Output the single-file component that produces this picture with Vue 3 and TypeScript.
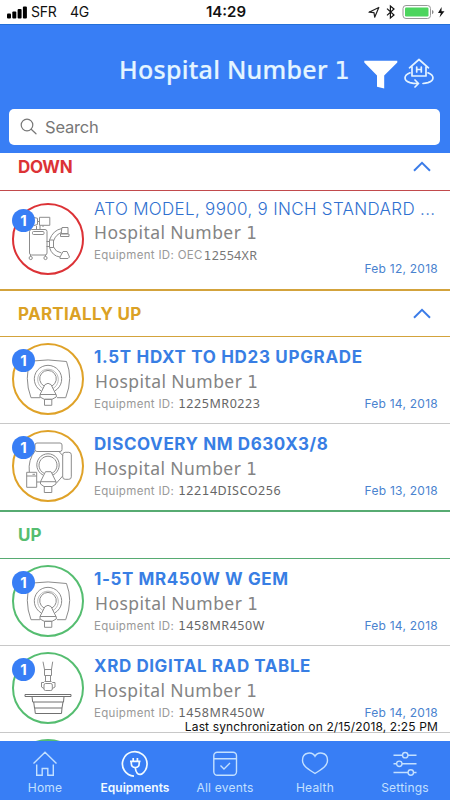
<script setup lang="ts">
import { defineComponent, h } from 'vue'

type Kind = 'carm' | 'mri' | 'nm' | 'xrd'

interface Equipment {
  name: string
  kind: Kind
  prefix?: string
  id: string
  date: string
  cls?: string
}

interface Section {
  title: string
  status: string
  chevron: boolean
  rows: Equipment[]
}

// Numeral "1" is drawn with a footed glyph.
const Spell = defineComponent({
  props: { text: { type: String, required: true } },
  setup(props) {
    return () =>
      h(
        'span',
        props.text.split(/(1)/).map((part) => (part === '1' ? h('span', { class: 'foot' }, part) : part)),
      )
  },
})

const sections: Section[] = [
  {
    title: 'DOWN',
    status: 'down',
    chevron: true,
    rows: [
      {
        name: 'ATO MODEL, 9900, 9 INCH STANDARD ...',
        kind: 'carm',
        prefix: 'OEC',
        id: '12554XR',
        date: 'Feb 12, 2018',
        cls: 'tall',
      },
    ],
  },
  {
    title: 'PARTIALLY UP',
    status: 'partial',
    chevron: true,
    rows: [
      { name: '1.5T HDXT TO HD23 UPGRADE', kind: 'mri', id: '1225MR0223', date: 'Feb 14, 2018', cls: 'shifted' },
      { name: 'DISCOVERY NM D630X3/8', kind: 'nm', id: '12214DISCO256', date: 'Feb 13, 2018' },
    ],
  },
  {
    title: 'UP',
    status: 'up',
    chevron: false,
    rows: [
      { name: '1-5T MR450W W GEM', kind: 'mri', id: '1458MR450W', date: 'Feb 14, 2018', cls: 'shifted' },
      { name: 'XRD DIGITAL RAD TABLE', kind: 'xrd', id: '1458MR450W', date: 'Feb 14, 2018' },
      { name: '', kind: 'mri', id: '', date: '' },
    ],
  },
]
</script>

<template>
  <div class="screen">
    <div class="status">
      <svg class="bars" width="21" height="13" viewBox="0 0 21 13">
        <rect x="0" y="7.5" width="4" height="5" rx="1" />
        <rect x="5.3" y="5.5" width="4" height="7" rx="1" />
        <rect x="10.6" y="3" width="4" height="9.5" rx="1" />
        <rect x="15.9" y="0.5" width="4" height="12" rx="1" />
      </svg>
      <span class="carrier">SFR</span>
      <span class="net">4G</span>
      <span class="clock">14:29</span>
      <svg class="sys" width="84" height="16" viewBox="0 0 84 16">
        <path d="M2 8.2 11.8 3.5 7.7 13.2 7 8.7Z" fill="none" stroke="#222" stroke-width="1.2" stroke-linejoin="round" />
        <path d="M20 4.6 27 11 23.4 14V2L27 5 20 11.4" fill="none" stroke="#111" stroke-width="1.2" />
        <rect x="36" y="1.5" width="27.5" height="13" rx="3" fill="#fff" stroke="#999" />
        <rect x="38" y="3.5" width="23.5" height="9" rx="1.2" fill="#4cd55e" />
        <path d="M65 6v4.2q1.6-.7 1.6-2.1T65 6Z" fill="#888" />
        <path d="M74.6 3 71 9h2.8l-1.3 4.4L77.500 7.300h-3Z" fill="#111" />
      </svg>
    </div>

    <header class="header">
      <div class="topline">
        <h1 class="title"><Spell text="Hospital Number 1" /></h1>
        <svg class="funnel" width="34" height="30" viewBox="0 0 34 30">
          <path d="M.3.8h33v1.6L20.2 15.500V28.500L13 26.800V15.500L.3 2.400Z" fill="#fff" />
        </svg>
        <svg class="site" width="30" height="30" viewBox="0 0 30 30" fill="none" stroke="#e4f3ff" stroke-width="1.7" stroke-linecap="round" stroke-linejoin="round">
          <path d="M5.500 9.800 15 1.500 24.500 9.800M8 8.500V18H22V8.500" />
          <path d="M12.700 9v5M17.300 9v5M12.700 11.500h4.600" stroke-width="1.700" />
          <path d="M6 14.800C-.7 17.500-.5 22.500 6 24.600q3.500 1 8 .9M11 22l3.500 3.500L11 29M24 14.800c6.700 2.700 6.500 7.700 0 9.800q-2.500.7-5 .9" />
        </svg>
      </div>
      <div class="search">
        <svg width="18" height="18" viewBox="0 0 18 18" fill="none" stroke="#777" stroke-width="1.2" stroke-linecap="round">
          <circle cx="7" cy="7" r="5.800" />
          <path d="M11.200 11.200 16 15.800" />
        </svg>
        <span>Search</span>
      </div>
    </header>

    <main class="list">
      <section v-for="s in sections" :key="s.title" :class="['section', s.status]">
        <div class="heading">
          <span>{{ s.title }}</span>
          <svg v-if="s.chevron" width="18" height="11" viewBox="0 0 18 11" fill="none" stroke="#3b7ce8" stroke-width="2">
            <path d="M1 9.700 9 1.900 17 9.700" />
          </svg>
        </div>
        <article v-for="(r, i) in s.rows" :key="i" :class="['row', r.cls]">
          <div class="avatar">
            <svg width="72" height="72" viewBox="0 0 72 72" fill="none" stroke="#8c8c8c" stroke-width="1" stroke-linejoin="round">
              <g v-if="r.kind === 'carm'">
                <rect x="27.500" y="14.300" width="10.300" height="8" />
                <path d="M22 14.500 25.500 15.300V21.500L22 22.500M24.500 23v3.500M28 22.500v4M25.500 18.500h2M31 22.500v1.500" />
                <rect x="17.500" y="26.500" width="17.500" height="25.500" rx="2" />
                <rect x="20.500" y="28.500" width="11.500" height="3" rx="1" />
                <path d="M18.500 52v1.500M33.500 52v1.500M34.500 38.500h3v5h-3M37.500 37h4v7.500h-4Z" />
                <circle cx="18.700" cy="55" r="1.600" />
                <circle cx="33.500" cy="55" r="1.600" />
                <path d="M37.500 37Q41 27 50 25.500M41.500 38Q44 31 50 29.500M37.500 44.500Q40 53 48 54M41.500 44Q43.500 49 49.500 50" />
                <path d="M50 24.500h6v6h-7ZM48.500 31h8.500v2.500h-8.500ZM48 54 51 48.500 55 48.500 57.500 54 56 55.500H48Z" />
              </g>
              <g v-else-if="r.kind === 'mri'">
                <path d="M28 54.700H19Q15.300 45 15.300 35.300 15.500 26 18 18.200 36 15.500 54.500 18.500 57.700 27 57.700 35.300 57.500 45 53.700 54.700H45" />
                <path d="M29 47.800A13.700 13.700 0 1 1 43 47.800" />
                <path d="M31 45.500A10.300 10.300 0 1 1 41 45.500" stroke="#bbb" />
                <path d="M32 43A8.300 8.300 0 1 1 40 43" />
                <path d="M28 51.500 33 41.600Q36 39 39 41.600L44 51.500ZM28 51.500V54L32.300 56.300H40L44.300 54V51.500" />
                <rect x="32.500" y="56.300" width="7.300" height="6" />
              </g>
              <g v-else-if="r.kind === 'nm'">
                <rect x="23" y="13" width="27" height="8.500" rx="2" />
                <rect x="50.700" y="22.300" width="8.600" height="27" rx="2.500" />
                <path d="M23 21Q16 30 17.300 42M47 21.500 50.700 25.500M50.700 46 44.500 53M25 52h4" />
                <path d="M31 45A11.200 11.200 0 1 1 41 45M32 43.300A9 9 0 1 1 40 43.300" />
                <rect x="14.700" y="42.300" width="10" height="15" />
                <path d="M14.700 46h10M20.500 44.300h2.500M28.500 51.700 33.500 41.700H39L44 51.700ZM28.500 51.700V54L32 56.500H40L44 54V51.700" />
                <rect x="32.300" y="56.500" width="7.500" height="6" />
              </g>
              <g v-else>
                <path d="M31 9.700 32.700 18.500M40.700 9.700 39.300 18.500M32.500 17.500h7v6h-7ZM33.500 23.500v6M38.500 23.500v6M32.500 29.500h7" />
                <rect x="32" y="31.500" width="8.300" height="7" rx="1.500" />
                <path d="M32 30.500H29.500V35L32 36.500M40.300 30.500H43V35L40.300 36.500" />
                <path d="M13 42.500H59V44.500H13ZM20 44.500 20.700 50H51.500L52 44.500M21.700 50 22.500 56H50L51 50M22.700 56 23.300 61.500H49.500L50 56" stroke="#707070" />
              </g>
            </svg>
            <span v-if="r.name" class="badge">1</span>
          </div>
          <div v-if="r.name" class="info">
            <div class="name">{{ r.name }}</div>
            <div class="place"><Spell text="Hospital Number 1" /></div>
            <div class="meta">
              <span class="label">Equipment ID:<template v-if="r.prefix">&nbsp;{{ r.prefix }}</template></span>
              <span class="code"><Spell :text="r.id" /></span>
              <span class="date">{{ r.date }}</span>
            </div>
          </div>
        </article>
      </section>
      <div class="sync">Last synchronization on 2/15/2018, 2:25 PM</div>
    </main>

    <nav class="tabs">
      <div class="tab">
        <svg width="28" height="28" viewBox="0 0 28 28"><path d="M2.500 13.500 14 2.200 25.500 13.500M5.700 14.500V25.200H11.200V18.500H16.800V25.200H22.300V14.500" /></svg>
        <span>Home</span>
      </div>
      <div class="tab active">
        <svg width="28" height="28" viewBox="0 0 28 28">
          <path d="M13 26.200A12.300 12.300 0 1 1 20.500 24.200Q15.200 25.500 14.300 18" stroke-width="1.700" />
          <path d="M9 11.300H19.500M10.300 11.500V13.500Q10.500 17.500 14.300 17.500T18.200 13.500V11.500M12.200 11V8M16.400 11V8" stroke-width="1.700" />
        </svg>
        <span>Equipments</span>
      </div>
      <div class="tab">
        <svg width="28" height="28" viewBox="0 0 28 28"><rect x="2.800" y="2.200" width="22.700" height="23" rx="3.500" /><path d="M2.800 8.800H25.500M9.500 15.500 13 19 19 13" /></svg>
        <span>All events</span>
      </div>
      <div class="tab">
        <svg width="28" height="28" viewBox="0 0 28 28"><path d="M14 6.300C11.500 1.500 1.500 1.500 1.500 10.200 1.500 16.500 8 19.500 14 23.500 20 19.500 26.500 16.500 26.500 10.200 26.500 1.500 16.500 1.500 14 6.300Z" /></svg>
        <span>Health</span>
      </div>
      <div class="tab">
        <svg width="28" height="28" viewBox="0 0 28 28">
          <path d="M2.500 5.200H11.500M17 5.200H25.500M2.500 13.800H5.500M11 13.800H25.500M2.500 22.500H17M22.500 22.500H25.500" />
          <circle cx="14.200" cy="5.200" r="2.700" /><circle cx="8.300" cy="13.800" r="2.700" /><circle cx="19.800" cy="22.500" r="2.700" />
        </svg>
        <span>Settings</span>
      </div>
    </nav>
  </div>
</template>

<style>
body {
  margin: 0;
}
.foot {
  font-family: 'DejaVu Sans', sans-serif;
  font-size: 0.96em;
}
</style>

<style scoped>
.screen {
  width: 450px;
  height: 800px;
  display: flex;
  flex-direction: column;
  overflow: hidden;
  background: #fff;
  font-family: Inter, sans-serif;
  white-space: nowrap;
}
.status {
  height: 24px;
  flex: none;
  display: grid;
  grid-template-columns: 24px 39px 136px 161px 84px;
  align-items: center;
  padding-left: 7px;
  box-sizing: border-box;
  font-size: 14px;
  line-height: 24px;
  color: #111;
}
.bars {
  fill: #000;
}
.carrier,
.net {
  letter-spacing: -0.2px;
}
.clock {
  font-weight: 600;
  font-size: 15px;
}
.header {
  height: 129px;
  flex: none;
  box-sizing: border-box;
  padding: 26px 10px 0 9px;
  background: #387ef5;
  border-top: 1px solid #2470d8;
}
.topline {
  display: flex;
  height: 59px;
  padding-left: 110px;
}
.title {
  margin: 0;
  width: 245px;
  font: 500 25px/36px 'Noto Sans', sans-serif;
  letter-spacing: 0.27px;
  -webkit-text-stroke: 0.2px #e4f5ff;
  color: #e4f5ff;
}
.funnel {
  margin-top: 9px;
}
.site {
  margin: 7px 0 0 6px;
}
.search {
  height: 36px;
  display: flex;
  align-items: center;
  gap: 7px;
  padding-left: 11px;
  margin-top: -1px;
  border-radius: 5px;
  background: #fff;
  font-size: 16.5px;
  letter-spacing: -0.2px;
  color: #777;
}
.list {
  flex: 1;
  min-height: 0;
  position: relative;
  overflow: hidden;
}
.heading {
  height: 48px;
  box-sizing: border-box;
  display: flex;
  align-items: center;
  justify-content: space-between;
  padding: 0 19px 0 18px;
  border-top: 2px solid;
  border-bottom: 1px solid;
  font-size: 17px;
  font-weight: 700;
}
.heading svg {
  margin-top: -1px;
}
.down .heading {
  height: 38px;
  padding-bottom: 10px;
  border-top: 0;
  color: #dc3236;
  border-color: #c24a4c;
  letter-spacing: -0.3px;
}
.partial .heading {
  color: #dba125;
  border-color: #d3a33c;
  letter-spacing: 0.3px;
}
.up .heading {
  height: 49px;
  color: #55bd70;
  border-color: #57ab72;
}
.row {
  height: 87px;
  box-sizing: border-box;
  display: flex;
  gap: 10px;
  padding: 6px 12px 0;
  border-bottom: 1px solid #c8c8c8;
}
.row:last-child {
  height: 86px;
  border-bottom: 0;
}
.row.tall {
  height: 98px;
  padding-top: 12px;
}
.avatar {
  width: 72px;
  height: 72px;
  flex: none;
  box-sizing: border-box;
  position: relative;
  border: 2px solid;
  border-radius: 50%;
}
.avatar svg {
  display: block;
  margin: -2px;
}
.down .avatar {
  border-color: #dc3236;
}
.partial .avatar {
  border-color: #dfa228;
}
.up .avatar {
  border-color: #55bd70;
}
.badge {
  position: absolute;
  left: -2px;
  top: 4px;
  width: 23px;
  height: 23px;
  border-radius: 50%;
  background: #387ef5;
  color: #fff;
  font-size: 15px;
  line-height: 23px;
  font-weight: 700;
  text-align: center;
}
.info {
  flex: 1;
  min-width: 0;
  padding-top: 2px;
}
.tall .info {
  margin-top: -9px;
}
.name {
  height: 24px;
  font-size: 17px;
  line-height: 24px;
  font-weight: 700;
  letter-spacing: 0.59px;
  color: #387ee4;
}
.partial .shifted .name {
  letter-spacing: 0.68px;
}
.tall .name {
  line-height: 26px;
  font-weight: 350;
  letter-spacing: 0.31px;
  color: #2f70d0;
}
.place {
  height: 24px;
  font: 17.5px/24px 'Noto Sans', sans-serif;
  letter-spacing: 0.44px;
  color: #848484;
}
.shifted .place {
  padding-left: 1px;
}
.meta {
  display: flex;
  height: 22px;
  font-size: 11.5px;
  line-height: 22px;
  color: #999;
}
.label {
  letter-spacing: 0.33px;
}
.code {
  margin-left: 4px;
  font: 12.5px/22px 'Noto Sans', sans-serif;
  letter-spacing: 0.55px;
  color: #666;
}
.tall .code {
  margin-left: 1px;
  padding-top: 1px;
  letter-spacing: 0.3px;
  color: #777;
}
.date {
  margin-left: auto;
  font-size: 12px;
  letter-spacing: 0.25px;
  color: #4a83cf;
}
.tall .date {
  padding-top: 14px;
}
.sync {
  position: absolute;
  right: 12px;
  top: 566px;
  font-size: 12px;
  line-height: 15px;
  letter-spacing: 0.135px;
  color: #111;
}
.tabs {
  height: 59px;
  flex: none;
  display: grid;
  grid-template-columns: repeat(5, 90px);
  background: #387ef5;
}
.tab {
  display: flex;
  flex-direction: column;
  align-items: center;
  padding-top: 9px;
  font-size: 12px;
  line-height: 20px;
  letter-spacing: 0.2px;
  color: #c3e0ff;
}
.tab svg {
  fill: none;
  stroke: #c3e0ff;
  stroke-width: 1.4;
}
.tab.active {
  font-weight: 600;
  letter-spacing: 0.03px;
  color: #f2fbff;
}
.tab.active svg {
  stroke: #f2fbff;
}
</style>
